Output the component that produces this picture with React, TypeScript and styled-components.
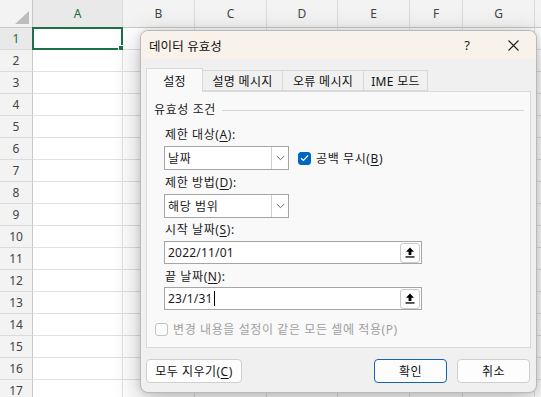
import React from 'react';
import styled, { createGlobalStyle } from 'styled-components';

const Global = createGlobalStyle`
  html, body { margin: 0; padding: 0; background: #ffffff; }
  body { font-family: "Noto Sans", "Noto Sans CJK KR", sans-serif; overflow: hidden; }
  #root { width: 541px; height: 397px; position: relative; overflow: hidden; }
`;

const COLS = [
  { name: 'A', w: 90 },
  { name: 'B', w: 72 },
  { name: 'C', w: 72 },
  { name: 'D', w: 71 },
  { name: 'E', w: 72 },
  { name: 'F', w: 53 },
  { name: 'G', w: 72 },
];

const Sheet = styled.div`
  display: grid;
  grid-template-columns: 33px ${COLS.map((c) => c.w + 'px').join(' ')} 10px;
  grid-template-rows: 28px repeat(17, 22px);
  width: 541px;
  height: 397px;
  overflow: hidden;
`;

const Corner = styled.div`
  background: #f3f3f3;
  border-right: 1px solid #c8c8c8;
  border-bottom: 1px solid #c8c8c8;
  box-sizing: border-box;
  display: flex;
  align-items: flex-end;
  justify-content: flex-end;
  padding: 0 3px 3px 0;
`;

const ColHead = styled.div<{ $sel?: boolean }>`
  box-sizing: border-box;
  background: ${(p) => (p.$sel ? '#e9e9e9' : '#f3f3f3')};
  border-right: 1px solid #dadada;
  border-bottom: 1px solid #c8c8c8;
  color: ${(p) => (p.$sel ? '#1d6b3c' : '#444444')};
  font-size: 12px;
  display: flex;
  align-items: center;
  justify-content: center;
`;

const RowHead = styled.div<{ $sel?: boolean }>`
  box-sizing: border-box;
  background: ${(p) => (p.$sel ? '#e9e9e9' : '#f3f3f3')};
  border-right: 1px solid #c8c8c8;
  border-bottom: 1px solid #dadada;
  color: ${(p) => (p.$sel ? '#1d6b3c' : '#444444')};
  font-size: 12px;
  display: flex;
  align-items: center;
  justify-content: center;
`;

const Cell = styled.div`
  box-sizing: border-box;
  background: #ffffff;
  border-right: 1px solid #e1e1e1;
  border-bottom: 1px solid #e1e1e1;
  position: relative;
`;

const Selection = styled.div`
  position: absolute;
  left: -1px;
  top: -1px;
  right: -1px;
  bottom: -1px;
  border: 2px solid #1e7145;
  pointer-events: none;
`;

const Handle = styled.div`
  position: absolute;
  right: -4px;
  bottom: -4px;
  width: 5px;
  height: 5px;
  background: #1e7145;
  border: 1px solid #ffffff;
`;

const Dialog = styled.div`
  position: absolute;
  left: 140px;
  top: 30px;
  width: 397px;
  height: 363px;
  box-sizing: border-box;
  background: #f0f0f0;
  border: 1px solid #b9b9b9;
  border-radius: 8px;
  overflow: hidden;
  box-shadow: 0 8px 28px rgba(0, 0, 0, 0.26), 0 0 6px rgba(0, 0, 0, 0.12);
  font-family: "Noto Sans", "Noto Sans CJK KR", sans-serif;
  color: #1a1a1a;
  display: flex;
  flex-direction: column;
`;

const TitleBar = styled.div`
  height: 28px;
  flex: none;
  background: #f9f2ea;
  display: flex;
  align-items: center;
  padding-left: 8px;
`;

const Title = styled.div`
  font-size: 12.5px;
  letter-spacing: 0.1px;
  flex: 1;
  color: #111;
`;

const TitleBtn = styled.div`
  width: 46px;
  height: 28px;
  display: flex;
  align-items: center;
  justify-content: center;
  font-size: 13px;
  color: #222;
`;

const Body = styled.div`
  padding: 9px 6px 0 5px;
  display: flex;
  flex-direction: column;
`;

const TabStrip = styled.div`
  display: flex;
  align-items: flex-end;
  height: 23px;
  position: relative;
  z-index: 1;
`;

const Tab = styled.div<{ $active?: boolean; $w: number }>`
  box-sizing: border-box;
  width: ${(p) => p.$w}px;
  height: ${(p) => (p.$active ? 24 : 21)}px;
  margin-bottom: ${(p) => (p.$active ? -1 : 0)}px;
  margin-left: -1px;
  &:first-child { margin-left: 0; }
  background: ${(p) => (p.$active ? '#f9f9f9' : '#f0f0f0')};
  border: 1px solid #d9d9d9;
  border-bottom: ${(p) => (p.$active ? 'none' : '1px solid #d9d9d9')};
  font-size: 12px;
  letter-spacing: 0.3px;
  display: flex;
  align-items: center;
  justify-content: center;
  padding-top: ${(p) => (p.$active ? 0 : 1)}px;
  color: #111;
`;

const Panel = styled.div`
  box-sizing: border-box;
  width: 385px;
  height: 257px;
  background: #f9f9f9;
  border: 1px solid #d9d9d9;
  padding: 10px 6px 0 7px;
  display: flex;
  flex-direction: column;
  font-size: 12px;
  letter-spacing: 0.6px;
`;

const GroupHead = styled.div`
  display: flex;
  align-items: center;
  height: 16px;
  gap: 6px;
`;

const GroupLabel = styled.div`
  line-height: 16px;
`;

const GroupLine = styled.div`
  flex: 1;
  height: 1px;
  background: #d6d6d6;
`;

const Fields = styled.div`
  display: flex;
  flex-direction: column;
  margin-left: 10px;
`;

const Label = styled.div<{ $mt: number }>`
  line-height: 16px;
  margin-left: 1px;
  margin-top: ${(p) => p.$mt}px;
`;

const Accel = styled.span`
  text-decoration: underline;
  text-underline-offset: 2px;
`;

const InputRow = styled.div<{ $mt: number }>`
  display: flex;
  align-items: center;
  margin-top: ${(p) => p.$mt}px;
`;

const Combo = styled.div`
  box-sizing: border-box;
  width: 125px;
  height: 24px;
  border: 1px solid #a5a5a5;
  background: #ffffff;
  display: flex;
  align-items: stretch;
`;

const ComboValue = styled.div`
  flex: 1;
  display: flex;
  align-items: center;
  padding-left: 3px;
`;

const DropBtn = styled.div`
  width: 17px;
  box-sizing: border-box;
  border-left: 1px solid #d0d0d0;
  display: flex;
  align-items: center;
  justify-content: center;
`;

const TextBox = styled.div`
  box-sizing: border-box;
  width: 258px;
  height: 23px;
  border: 1px solid #a5a5a5;
  background: #ffffff;
  display: flex;
  align-items: center;
  padding: 0 1px 0 3px;
`;

const TextValue = styled.div`
  flex: 1;
  letter-spacing: 0.2px;
  display: flex;
  align-items: center;
`;

const Caret = styled.span`
  display: inline-block;
  width: 1px;
  height: 15px;
  background: #000;
  margin-left: 1px;
`;

const RefBtn = styled.div`
  box-sizing: border-box;
  width: 20px;
  height: 20px;
  border: 1px solid #c9c9c9;
  border-radius: 3px;
  background: #fdfdfd;
  display: flex;
  align-items: center;
  justify-content: center;
`;

const CheckWrap = styled.div<{ $ml: number; $disabled?: boolean }>`
  display: flex;
  align-items: center;
  gap: 5px;
  margin-left: ${(p) => p.$ml}px;
  color: ${(p) => (p.$disabled ? '#a0a0a0' : '#1a1a1a')};
`;

const CheckBox = styled.div<{ $checked?: boolean }>`
  box-sizing: border-box;
  width: 13px;
  height: 13px;
  border-radius: 3px;
  background: ${(p) => (p.$checked ? '#0067c0' : '#fbfbfb')};
  border: 1px solid ${(p) => (p.$checked ? '#0067c0' : '#c4c4c4')};
  display: flex;
  align-items: center;
  justify-content: center;
`;

const ApplyRow = styled.div`
  margin-top: 11px;
  height: 16px;
  display: flex;
`;

const Footer = styled.div`
  display: flex;
  margin-top: 11px;
  gap: 10px;
`;

const Button = styled.div<{ $w: number; $primary?: boolean }>`
  box-sizing: border-box;
  width: ${(p) => p.$w}px;
  height: 24px;
  border-radius: 4px;
  border: 1px solid ${(p) => (p.$primary ? '#1565b5' : '#d0d0d0')};
  background: #fdfdfd;
  font-size: 12px;
  letter-spacing: 0.5px;
  display: flex;
  align-items: center;
  justify-content: center;
  color: #111;
`;

const Spacer = styled.div`
  flex: 1;
`;

const Chevron = () => (
  <svg width="9" height="6" viewBox="0 0 9 6">
    <path d="M0.8 1 L4.5 4.7 L8.2 1" fill="none" stroke="#6a6a6a" strokeWidth="1" />
  </svg>
);

const Check = () => (
  <svg width="9" height="8" viewBox="0 0 9 8">
    <path d="M1 4.2 L3.4 6.5 L8 1.5" fill="none" stroke="#ffffff" strokeWidth="1.2" />
  </svg>
);

const RefIcon = () => (
  <svg width="10" height="11" viewBox="0 0 10 11">
    <path d="M5 0.5 L9 4.8 L6.4 4.8 L6.4 8 L3.6 8 L3.6 4.8 L1 4.8 Z" fill="#000" />
    <rect x="0.5" y="9.3" width="9" height="1.3" fill="#000" />
  </svg>
);

const CornerTri = () => (
  <svg width="14" height="13" viewBox="0 0 14 13">
    <path d="M14 0 L14 13 L0 13 Z" fill="#bdbdbd" />
  </svg>
);

const CloseIcon = () => (
  <svg width="11" height="11" viewBox="0 0 11 11">
    <path d="M0.5 0.5 L10.5 10.5 M10.5 0.5 L0.5 10.5" stroke="#222" strokeWidth="1.1" />
  </svg>
);

const ROWS = Array.from({ length: 17 }, (_, i) => i + 1);

export default function App() {
  return (
    <>
      <Global />
      <Sheet>
        <Corner>
          <CornerTri />
        </Corner>
        {COLS.map((c) => (
          <ColHead key={c.name} $sel={c.name === 'A'}>
            {c.name}
          </ColHead>
        ))}
        <ColHead />
        {ROWS.map((r) => (
          <React.Fragment key={r}>
            <RowHead $sel={r === 1}>{r}</RowHead>
            {COLS.map((c) => (
              <Cell key={c.name}>
                {r === 1 && c.name === 'A' && (
                  <Selection>
                    <Handle />
                  </Selection>
                )}
              </Cell>
            ))}
            <Cell />
          </React.Fragment>
        ))}
      </Sheet>

      <Dialog>
        <TitleBar>
          <Title>데이터 유효성</Title>
          <TitleBtn>?</TitleBtn>
          <TitleBtn>
            <CloseIcon />
          </TitleBtn>
        </TitleBar>
        <Body>
          <TabStrip>
            <Tab $active $w={57}>설정</Tab>
            <Tab $w={81}>설명 메시지</Tab>
            <Tab $w={82}>오류 메시지</Tab>
            <Tab $w={65}>IME 모드</Tab>
          </TabStrip>
          <Panel>
            <GroupHead>
              <GroupLabel>유효성 조건</GroupLabel>
              <GroupLine />
            </GroupHead>
            <Fields>
              <Label $mt={9}>
                제한 대상(<Accel>A</Accel>):
              </Label>
              <InputRow $mt={3}>
                <Combo>
                  <ComboValue>날짜</ComboValue>
                  <DropBtn>
                    <Chevron />
                  </DropBtn>
                </Combo>
                <CheckWrap $ml={9}>
                  <CheckBox $checked>
                    <Check />
                  </CheckBox>
                  <span>
                    공백 무시(<Accel>B</Accel>)
                  </span>
                </CheckWrap>
              </InputRow>
              <Label $mt={5}>
                제한 방법(<Accel>D</Accel>):
              </Label>
              <InputRow $mt={3}>
                <Combo>
                  <ComboValue>해당 범위</ComboValue>
                  <DropBtn>
                    <Chevron />
                  </DropBtn>
                </Combo>
              </InputRow>
              <Label $mt={4}>
                시작 날짜(<Accel>S</Accel>):
              </Label>
              <InputRow $mt={3}>
                <TextBox>
                  <TextValue>2022/11/01</TextValue>
                  <RefBtn>
                    <RefIcon />
                  </RefBtn>
                </TextBox>
              </InputRow>
              <Label $mt={5}>
                끝 날짜(<Accel>N</Accel>):
              </Label>
              <InputRow $mt={2}>
                <TextBox>
                  <TextValue>
                    23/1/31
                    <Caret />
                  </TextValue>
                  <RefBtn>
                    <RefIcon />
                  </RefBtn>
                </TextBox>
              </InputRow>
            </Fields>
            <ApplyRow>
              <CheckWrap $ml={1} $disabled>
                <CheckBox />
                <span>변경 내용을 설정이 같은 모든 셀에 적용(P)</span>
              </CheckWrap>
            </ApplyRow>
          </Panel>
          <Footer>
            <Button $w={96}>
              모두 지우기(<Accel>C</Accel>)
            </Button>
            <Spacer />
            <Button $w={73} $primary>
              확인
            </Button>
            <Button $w={73}>취소</Button>
          </Footer>
        </Body>
      </Dialog>
    </>
  );
}
